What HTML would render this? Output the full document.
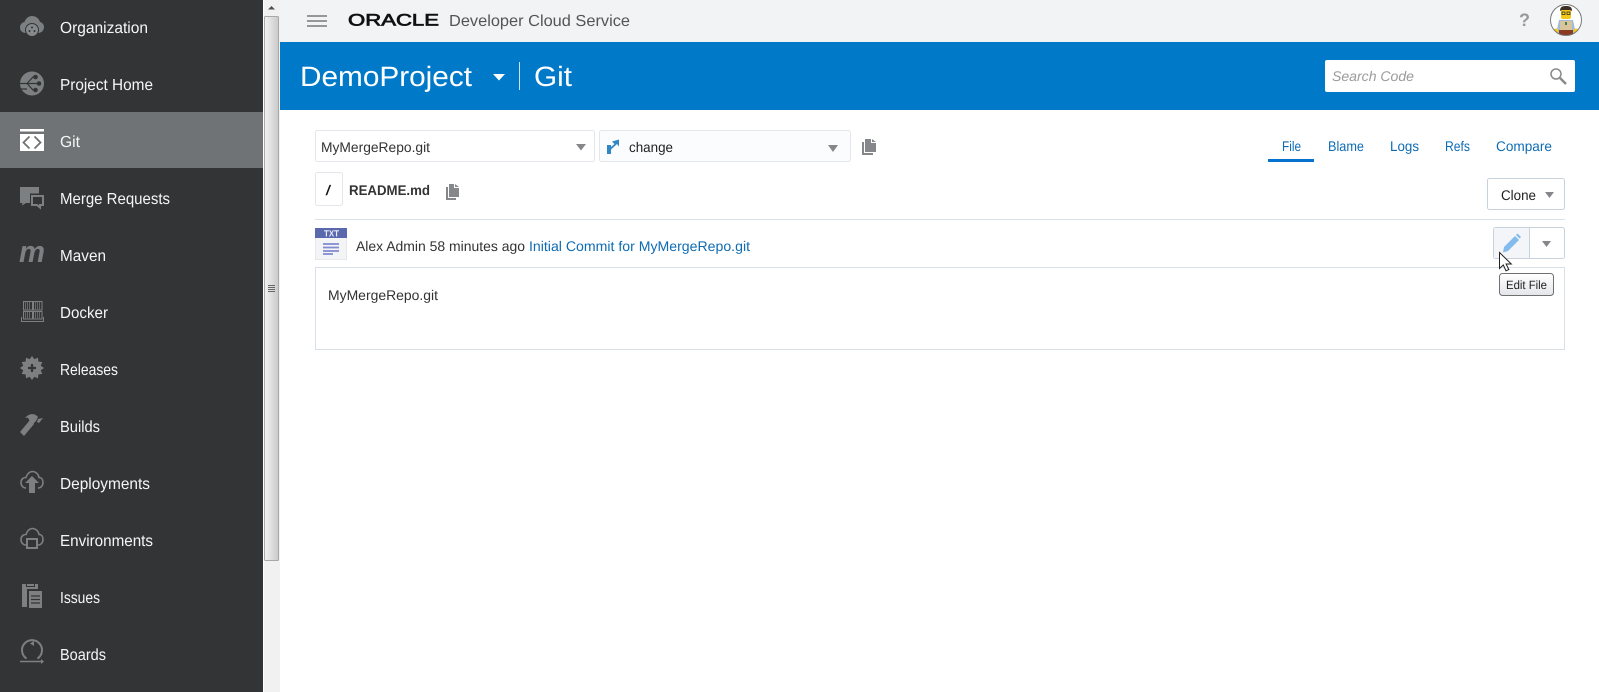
<!DOCTYPE html>
<html lang="en">
<head>
<meta charset="utf-8">
<title>Git - DemoProject</title>
<style>
html,body{margin:0;padding:0;width:1599px;height:692px;overflow:hidden;background:#fff}
svg{display:block;position:absolute;left:0;top:0}
text{font-family:"Liberation Sans",sans-serif;font-size:14px;text-rendering:geometricPrecision}
.n text{font-size:16px;fill:#f4f6f6}
.i{fill:#7c8082}
.o{fill:none;stroke:#7c8082;stroke-width:1.600}
.t{fill:#333}
.l{fill:#0e6cb3}
.b{fill:#fff;stroke:#e3e6ea}
.g{fill:#85878a}
.k{fill:#fff;stroke:#c8d2dc}
</style>
</head>
<body>
<svg width="1599" height="692" viewBox="0 0 1599 692" xmlns="http://www.w3.org/2000/svg">
<!-- sidebar -->
<rect width="263" height="692" fill="#333436"/>
<rect y="112" width="263" height="56" fill="#6f7375"/>
<g class="n">
<text x="60" y="33" textLength="88" lengthAdjust="spacingAndGlyphs">Organization</text>
<text x="60" y="90" textLength="93" lengthAdjust="spacingAndGlyphs">Project Home</text>
<text x="60" y="147" textLength="20" lengthAdjust="spacingAndGlyphs">Git</text>
<text x="60" y="204" textLength="110" lengthAdjust="spacingAndGlyphs">Merge Requests</text>
<text x="60" y="261" textLength="46" lengthAdjust="spacingAndGlyphs">Maven</text>
<text x="60" y="318" textLength="48" lengthAdjust="spacingAndGlyphs">Docker</text>
<text x="60" y="375" textLength="58" lengthAdjust="spacingAndGlyphs">Releases</text>
<text x="60" y="432" textLength="40" lengthAdjust="spacingAndGlyphs">Builds</text>
<text x="60" y="489" textLength="90" lengthAdjust="spacingAndGlyphs">Deployments</text>
<text x="60" y="546" textLength="93" lengthAdjust="spacingAndGlyphs">Environments</text>
<text x="60" y="603" textLength="40" lengthAdjust="spacingAndGlyphs">Issues</text>
<text x="60" y="660" textLength="46" lengthAdjust="spacingAndGlyphs">Boards</text>
</g>
<!-- org -->
<path class="i" d="M26 33c-3.500 0-6-2.200-6-5.500 0-3 2-5 4.500-5.500 1-3.500 4-6 7.500-6 4 0 7 2.500 8 6 2.300.5 4 2.500 4 5 0 3.500-2.500 6-6 6z"/>
<circle cx="32" cy="30" r="6.500" fill="#85898b" stroke="#333436" stroke-width="1"/>
<circle cx="32" cy="27.500" r="1" fill="#333436"/><circle cx="29.500" cy="31" r="1" fill="#333436"/><circle cx="34.500" cy="31" r="1" fill="#333436"/>
<!-- project home -->
<circle class="i" cx="32" cy="83.500" r="12"/>
<path d="M20 83.500h18M27 83.500l6-6.500h2M27 83.500l6 6.500h2M21 89h6" stroke="#333436" stroke-width="1.200" fill="none"/>
<circle cx="35.500" cy="77" r="2.300" fill="#333436"/><circle cx="39" cy="83.500" r="2.300" fill="#333436"/><circle cx="35.500" cy="90" r="2.300" fill="#333436"/>
<!-- git -->
<rect x="20" y="129" width="24" height="2.500" fill="#fff"/>
<rect x="20" y="134" width="24" height="17" fill="#fff"/>
<path d="M29.500 136.500l-6 6 6 6M34.500 136.500l6 6-6 6" fill="none" stroke="#6f7375" stroke-width="1.800"/>
<!-- merge -->
<path class="i" d="M20 187h19v16h-13l-4 2.500.5-2.500h-2.500z"/>
<path d="M30 193.500h15v13h-5v3l-3.500-3h-6.500z" fill="#333436"/>
<path d="M32 196h11v9h-3v2.500l-3-2.500h-5z" fill="none" stroke="#7c8082" stroke-width="2"/>
<!-- maven -->
<text x="19" y="262" style="font-size:30px;font-weight:bold;font-style:italic;fill:#7c8082" textLength="26" lengthAdjust="spacingAndGlyphs">m</text>
<!-- docker -->
<g fill="none" stroke="#7c8082" stroke-width="1">
<rect x="23.500" y="301.500" width="9" height="8.500"/><rect x="33.500" y="301.500" width="8.500" height="8.500"/>
<rect x="23.500" y="311.500" width="9" height="7.500"/><rect x="33.500" y="311.500" width="8.500" height="7.500"/>
<path d="M25.500 302v8M27.500 302v8M29.500 302v8M35.500 302v8M37.500 302v8M39.500 302v8M25.500 312v7M27.500 312v7M29.500 312v7M35.500 312v7M37.500 312v7M39.500 312v7" stroke="#64686a"/>
<path d="M21.500 317v4.500h22v-4.500"/>
</g>
<!-- releases -->
<polygon class="i" transform="translate(32 368)" points="0,-12 2.330,-8.690 6,-10.390 6.360,-6.360 10.390,-6 8.690,-2.330 12,0 8.690,2.330 10.390,6 6.360,6.360 6,10.390 2.330,8.690 0,12 -2.330,8.690 -6,10.390 -6.360,6.360 -10.390,6 -8.690,2.330 -12,0 -8.690,-2.330 -10.390,-6 -6.360,-6.360 -6,-10.390 -2.330,-8.690"/>
<path d="M32 364v8M28 368h8" stroke="#333436" stroke-width="2.200"/>
<!-- builds -->
<path class="i" d="M20 432l10-12 4 4-10 12z"/>
<path class="i" d="M25 418c4-5 10-5 13-1l-2 4-3 3-4-4c0-2-2-3-4-2z"/>
<path class="i" d="M38 419l5-1-4 5-2-1z"/>
<!-- deployments -->
<path class="o" d="M26 488c-3 0-5-2.500-5-5.500s2-5 5-5c1-3.500 3.500-6 6.500-6s6 2.500 6.500 6c2.500 0 4 2 4 5s-2 5.500-5 5.500"/>
<path d="M32 474l9 9.500h-4v10.500h-10v-10.500h-4z" fill="#333436"/>
<path class="i" d="M32 476l7 7h-4v10h-6v-10h-4z"/>
<!-- environments -->
<path class="o" d="M26 545c-3 0-5-2.500-5-5.500s2-5 5-5c1-3.500 3.500-6 6.500-6s6 2.500 6.500 6c2.500 0 4 2 4 5s-2 5.500-5 5.500"/>
<rect x="27" y="539" width="10" height="9" fill="#333436" stroke="#7c8082" stroke-width="2"/>
<!-- issues -->
<path class="i" d="M22 584h4v3h9v-3h3v5h-11v18h-5z"/>
<rect class="i" x="27" y="584" width="7" height="2"/>
<path class="i" d="M29 591h13v17h-13z"/>
<path d="M31 596h9M31 599.500h9M31 603h9" stroke="#333436" stroke-width="1.200"/>
<!-- boards -->
<path class="o" d="M26.500 658.500a10 10 0 1 1 11 0" style="stroke-width:2"/>
<path class="i" d="M34 641l-4 2.500 4 2.500z"/>
<path d="M20 661.500h22" stroke="#7c8082" stroke-width="1.600"/>
<path class="i" d="M41 659l3 2.500-3 2.500z"/>

<!-- scrollbar -->
<rect x="263" width="17" height="692" fill="#f1f1f1"/>
<rect x="263" width="1" height="692" fill="#fff"/>
<path d="M268 9.500l3.500-3.500 3.500 3.500z" fill="#505050"/>
<linearGradient id="sb" x1="0" x2="1" y1="0" y2="0"><stop offset="0" stop-color="#f2f2f2"/><stop offset=".5" stop-color="#dedede"/><stop offset="1" stop-color="#c9c9c9"/></linearGradient>
<rect x="264.500" y="16.500" width="14" height="544" rx="1" fill="url(#sb)" stroke="#a8a8a8"/>
<path d="M268 285.500h7M268 287.500h7M268 289.500h7M268 291.500h7" stroke="#666"/>

<!-- top bar -->
<rect x="280" width="1319" height="42" fill="#f1f3f5"/>
<path d="M307 16h20M307 21h20M307 26h20" stroke="#979797" stroke-width="2"/>
<text x="348" y="25.500" style="font-size:16.500px;fill:#111;stroke:#111;stroke-width:.7" textLength="91" lengthAdjust="spacingAndGlyphs">ORACLE</text>
<text x="449" y="26" style="font-size:16px;fill:#555" textLength="181" lengthAdjust="spacingAndGlyphs">Developer Cloud Service</text>
<text x="1519" y="26" style="font-size:18px;font-weight:bold;fill:#999">?</text>
<!-- avatar -->
<clipPath id="av"><circle cx="1566" cy="20" r="15.500"/></clipPath>
<circle cx="1566" cy="20" r="15.500" fill="#fff"/>
<g clip-path="url(#av)">
<path d="M1556 34l3-14h14l3 14z" fill="#9dbcd8"/>
<path d="M1560 34v-13h12v13z" fill="#d9c49c"/>
<rect x="1559" y="30" width="14" height="5" fill="#8a3b22"/>
<rect x="1561" y="9" width="10" height="10" rx="2" fill="#f4c91a"/>
<path d="M1560 11c0-4 2-5 6-5s6 1 6 5l-2-1h-8z" fill="#3a2e26"/>
<rect x="1562" y="12" width="3" height="2.500" fill="none" stroke="#222" stroke-width=".7"/><rect x="1567" y="12" width="3" height="2.500" fill="none" stroke="#222" stroke-width=".7"/>
<rect x="1565" y="22" width="2" height="3" fill="#3f7f56"/>
<circle cx="1556" cy="31" r="2.500" fill="#f4c91a"/><circle cx="1576" cy="31" r="2.500" fill="#f4c91a"/>
</g>
<circle cx="1566" cy="20" r="15.500" fill="none" stroke="#77797b" stroke-width="1"/>

<!-- blue bar -->
<rect x="280" y="42" width="1319" height="68" fill="#007ac8"/>
<text x="300" y="86" style="font-size:28px;fill:#fff" textLength="172" lengthAdjust="spacingAndGlyphs">DemoProject</text>
<path d="M493 74h12l-6 6.500z" fill="#fff"/>
<rect x="519" y="62" width="1" height="28" fill="#cfe4f3"/>
<text x="534" y="86" style="font-size:28px;fill:#fff" textLength="38" lengthAdjust="spacingAndGlyphs">Git</text>
<rect x="1325" y="60" width="250" height="32" rx="2" fill="#fff"/>
<text x="1332" y="81" style="font-style:italic;fill:#9b9b9b" textLength="82" lengthAdjust="spacingAndGlyphs">Search Code</text>
<circle cx="1556" cy="74" r="5" fill="none" stroke="#8a8a8a" stroke-width="1.500"/>
<path d="M1560 78l6 6" stroke="#8a8a8a" stroke-width="2.500"/>

<!-- selects row -->
<rect class="b" x="315.500" y="130.500" width="279" height="31" rx="2"/>
<text class="t" x="321" y="152" textLength="109" lengthAdjust="spacingAndGlyphs">MyMergeRepo.git</text>
<path class="g" d="M576 144h10l-5 6.500z"/>
<rect x="599.500" y="130.500" width="251" height="31" rx="2" fill="#fbfcfe" stroke="#e3e6ea"/>
<path d="M607 154v-9h4v2l3.500-3-2.500-2.500 7-2v7l-2-2.500-6 5.500v4.500z" fill="#2f87c3"/>
<text x="629" y="152" style="fill:#222" textLength="44" lengthAdjust="spacingAndGlyphs">change</text>
<path class="g" d="M828 145h10l-5 7z"/>
<g fill="#85878a">
<path d="M862 142h2v11h9v2h-11z"/>
<path d="M865 139h6v4h5v9h-11zM872 139l4 3h-4z"/>
</g>
<!-- tabs -->
<g class="l">
<text x="1282" y="151" textLength="19" lengthAdjust="spacingAndGlyphs">File</text>
<text x="1328" y="151" textLength="36" lengthAdjust="spacingAndGlyphs">Blame</text>
<text x="1390" y="151" textLength="29" lengthAdjust="spacingAndGlyphs">Logs</text>
<text x="1445" y="151" textLength="25" lengthAdjust="spacingAndGlyphs">Refs</text>
<text x="1496" y="151" textLength="56" lengthAdjust="spacingAndGlyphs">Compare</text>
</g>
<rect x="1268" y="159" width="46" height="3" fill="#0572ce"/>

<!-- path row -->
<rect class="b" x="315.500" y="172.500" width="27" height="33" rx="2"/>
<text x="326" y="195" style="font-weight:bold;font-style:italic;fill:#111">/</text>
<text x="349" y="195" style="font-weight:bold;fill:#333" textLength="81" lengthAdjust="spacingAndGlyphs">README.md</text>
<g fill="#85878a">
<path d="M446 187h2v11h8v2h-10z"/>
<path d="M449 184h5v4h5v9h-10zM455 184l4 3h-4z"/>
</g>
<rect class="k" x="1487.500" y="178.500" width="77" height="31" rx="2"/>
<text x="1501" y="200" style="fill:#222" textLength="35" lengthAdjust="spacingAndGlyphs">Clone</text>
<path class="g" d="M1545 192h9l-4.500 6z"/>
<rect x="315" y="219" width="1250" height="1" fill="#dbe1e8"/>

<!-- commit row -->
<rect x="315.500" y="228.500" width="31" height="31" fill="#f3f4f6" stroke="#e6e7ea"/>
<rect x="315" y="228" width="32" height="10" fill="#5a68ae"/>
<text x="324" y="236.500" style="font-size:9px;font-weight:bold;fill:#e8eaf6" textLength="15" lengthAdjust="spacingAndGlyphs">TXT</text>
<path d="M323 244h16M323 247.500h16M323 251h16M323 254h10" stroke="#8189d2" stroke-width="1.800"/>
<text class="t" x="356" y="251" textLength="169" lengthAdjust="spacingAndGlyphs">Alex Admin 58 minutes ago</text>
<text class="l" x="529" y="251" textLength="221" lengthAdjust="spacingAndGlyphs">Initial Commit for MyMergeRepo.git</text>

<!-- edit group -->
<rect class="k" x="1493.500" y="227.500" width="71" height="31" rx="2"/>
<path d="M1494 228h35v30h-35z" fill="#f3f5f8"/>
<rect x="1529" y="228" width="1" height="30" fill="#c8d2dc"/>
<path d="M1504 247l11-11 4 4-11 11-5 1.500z" fill="#83bcec"/>
<path d="M1516 235l1.500-1.500 3.500 3.500-1.500 1.500z" fill="#83bcec"/>
<path class="g" d="M1542 241h9l-4.500 6z"/>

<!-- file box -->
<rect x="315.500" y="267.500" width="1249" height="82" fill="#fff" stroke="#d9e0e8"/>
<text class="t" x="328" y="300" textLength="110" lengthAdjust="spacingAndGlyphs">MyMergeRepo.git</text>

<!-- tooltip -->
<linearGradient id="tt" x1="0" x2="0" y1="0" y2="1"><stop offset="0" stop-color="#fff"/><stop offset="1" stop-color="#e4e6ea"/></linearGradient>
<rect x="1499.500" y="273.500" width="54" height="22" rx="3" fill="url(#tt)" stroke="#707070"/>
<text x="1506" y="289" style="font-size:12px;fill:#222" textLength="41" lengthAdjust="spacingAndGlyphs">Edit File</text>

<!-- cursor -->
<path d="M1499.500 252.500v16l3.800-3.500 2.700 5.800 2.800-1.300-2.700-5.500h5.200z" fill="#fff" stroke="#222" stroke-width="1"/>
</svg>
</body>
</html>
